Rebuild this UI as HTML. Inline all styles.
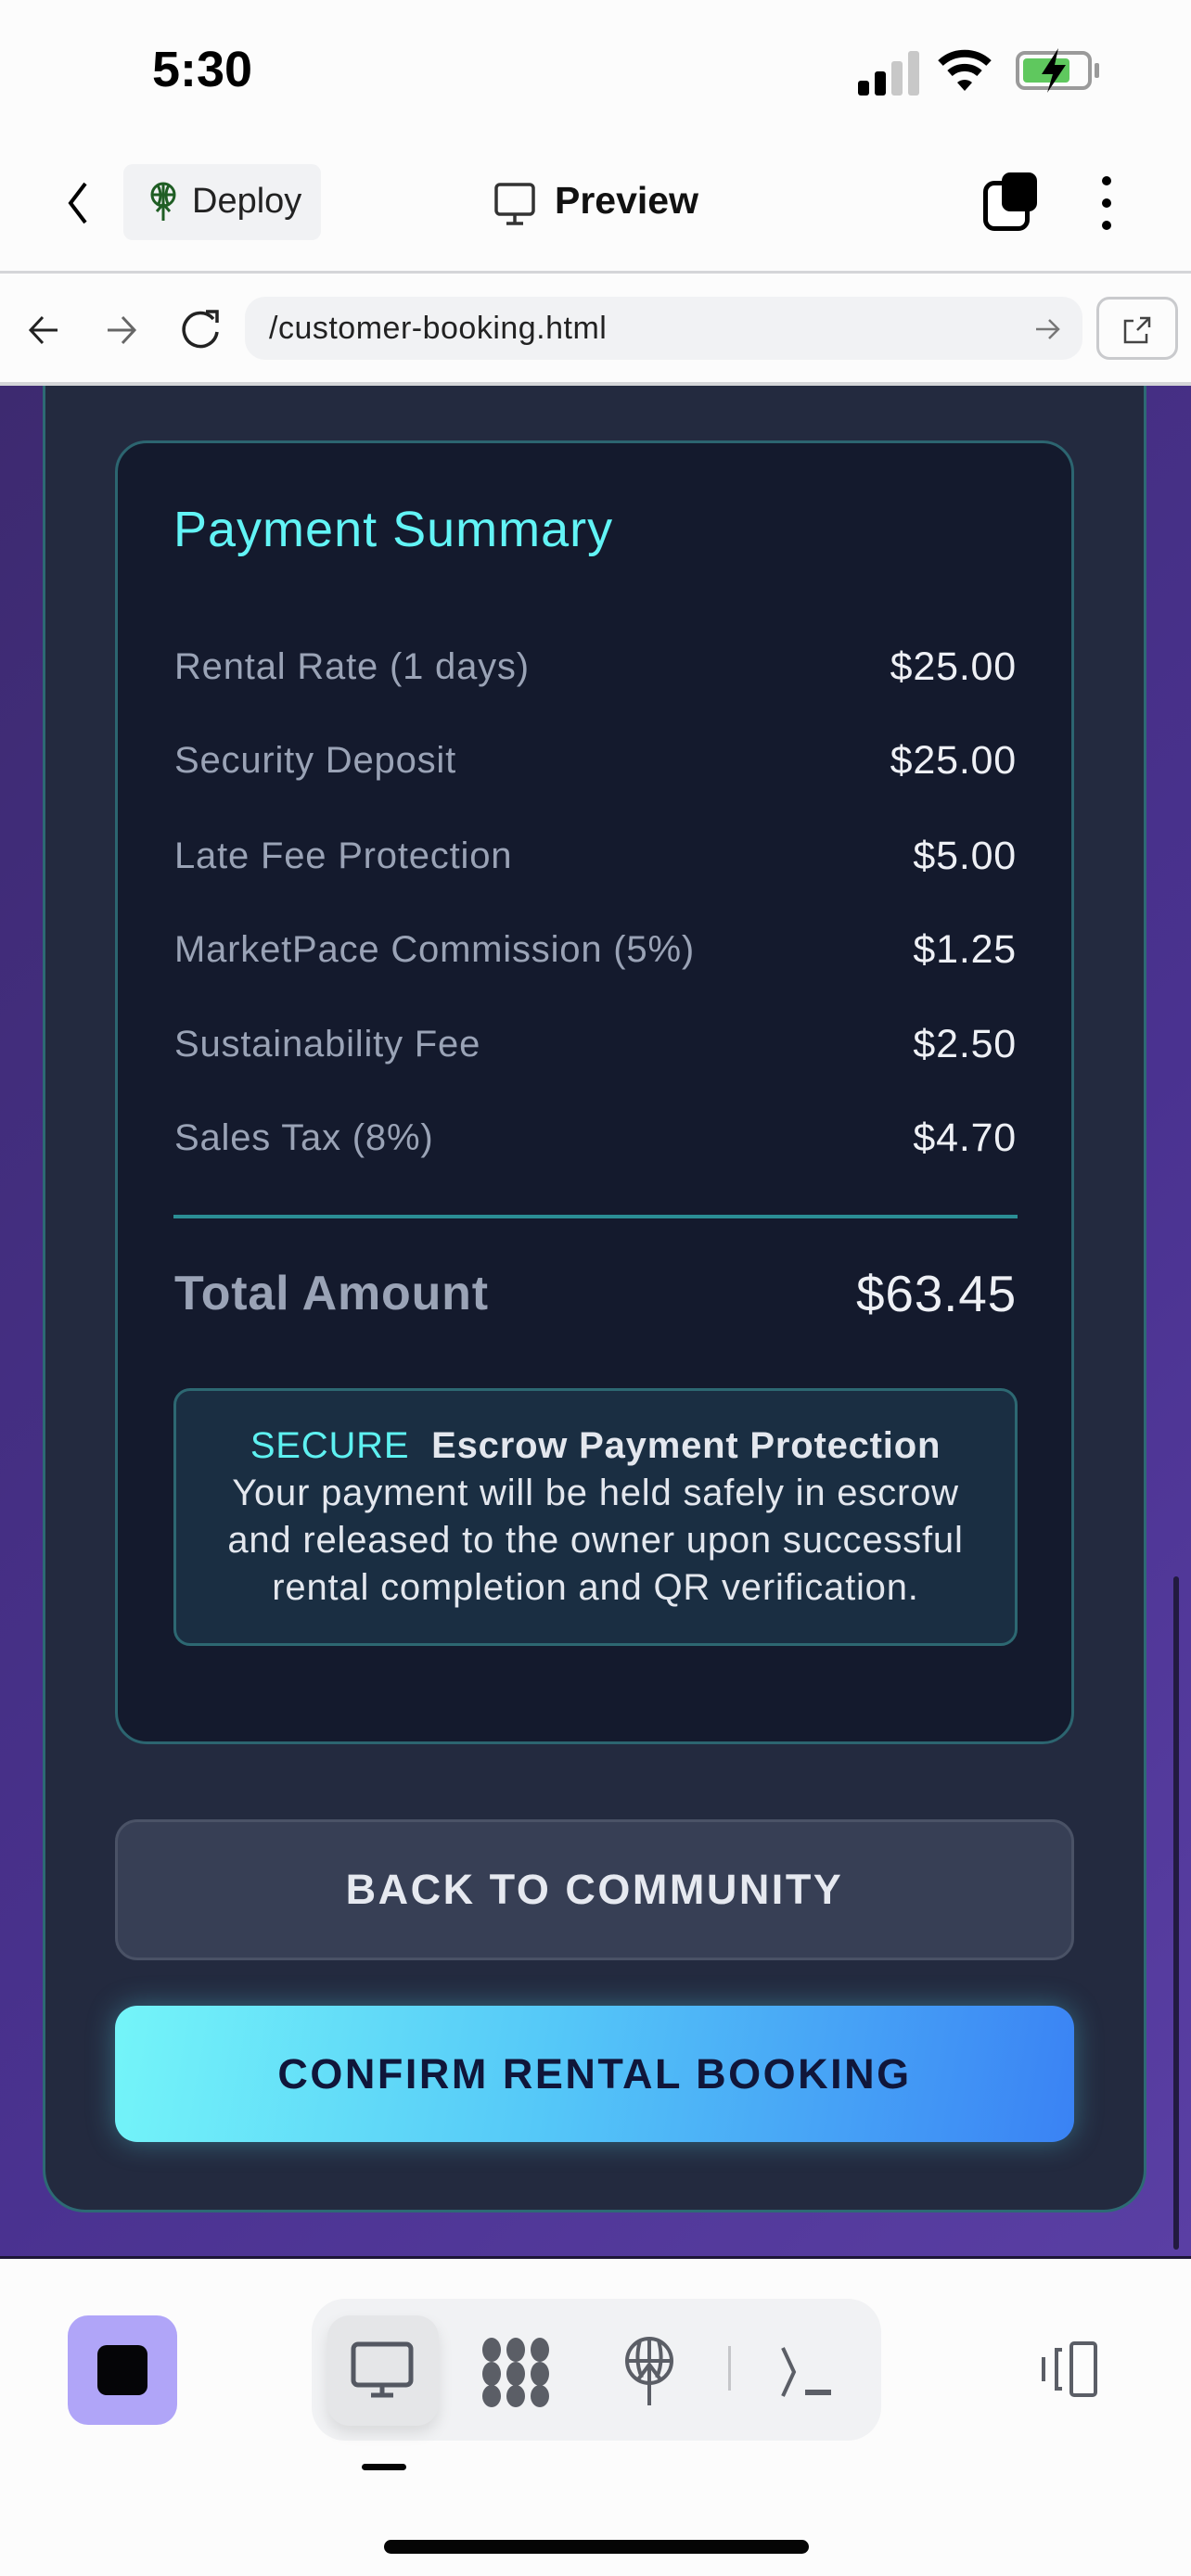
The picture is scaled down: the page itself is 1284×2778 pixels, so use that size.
<!DOCTYPE html>
<html><head><meta charset="utf-8"><style>
*{margin:0;padding:0;box-sizing:border-box}
body{width:1284px;height:2778px;background:#fcfcfc;font-family:"Liberation Sans",sans-serif;position:relative;overflow:hidden}
.abs{position:absolute}
.row{position:absolute;left:188px;width:908px;display:flex;justify-content:space-between;font-size:40px;line-height:48px;letter-spacing:0.8px}
.row .l{color:#9aa3b6}.row .v{color:#eef0f5;font-size:43px}
</style></head><body>
<!-- status bar -->
<div class="abs" style="left:164px;top:44px;font-size:54px;font-weight:bold;color:#000">5:30</div>
<div class="abs" style="left:925px;top:87px;width:12px;height:16px;background:#000;border-radius:3px"></div>
<div class="abs" style="left:943px;top:77px;width:12px;height:26px;background:#000;border-radius:3px"></div>
<div class="abs" style="left:961px;top:66px;width:12px;height:37px;background:#c8c8c8;border-radius:3px"></div>
<div class="abs" style="left:979px;top:55px;width:12px;height:48px;background:#c8c8c8;border-radius:3px"></div>
<svg class="abs" style="left:1010px;top:52px" width="60" height="48" viewBox="0 0 60 48"><path d="M4 16 A38 38 0 0 1 56 16" stroke="#000" stroke-width="8" fill="none"/><path d="M14 27 A24 24 0 0 1 46 27" stroke="#000" stroke-width="8" fill="none"/><path d="M22 37 L30 46 L38 37 A12 12 0 0 0 22 37Z" fill="#000"/></svg>
<div class="abs" style="left:1095px;top:55px;width:82px;height:42px;border:4px solid #9a9a9a;border-radius:10px"><div style="margin:4px;width:50px;height:26px;background:#5fc85e;border-radius:4px"></div></div>
<div class="abs" style="left:1180px;top:68px;width:5px;height:16px;background:#9a9a9a;border-radius:2px"></div>
<svg class="abs" style="left:1115px;top:50px" width="40" height="52" viewBox="0 0 40 52"><path d="M26 2 L8 30 H20 L14 50 L34 20 H22Z" fill="#000"/></svg>
<!-- toolbar -->
<svg class="abs" style="left:68px;top:194px" width="30" height="50" viewBox="0 0 30 50"><path d="M24 4 L8 25 L24 46" stroke="#000" stroke-width="4" fill="none"/></svg>
<div class="abs" style="left:133px;top:177px;width:213px;height:82px;background:#f1f2f4;border-radius:10px"></div>
<svg class="abs" style="left:160px;top:196px" width="32" height="44" viewBox="0 0 32 44"><g stroke="#1f5e24" stroke-width="3" fill="none"><circle cx="16" cy="14" r="12"/><path d="M4 14H28M16 2V42M10 4Q16 14 10 26M22 4Q16 14 22 26M9 32L16 24L23 32"/></g></svg>
<div class="abs" style="left:207px;top:196px;font-size:38px;color:#222">Deploy</div>
<svg class="abs" style="left:532px;top:196px" width="46" height="48" viewBox="0 0 46 48"><rect x="3" y="3" width="40" height="32" rx="4" stroke="#333" stroke-width="3.5" fill="none"/><path d="M23 35V44M14 45H32" stroke="#333" stroke-width="3.5"/></svg>
<div class="abs" style="left:598px;top:193px;font-size:41px;font-weight:bold;color:#111">Preview</div>
<div class="abs" style="left:1060px;top:195px;width:50px;height:54px;border:5px solid #000;border-radius:12px;background:#fff"></div>
<div class="abs" style="left:1080px;top:186px;width:38px;height:42px;background:#000;border-radius:9px"></div>
<div class="abs" style="left:1188px;top:190px;width:10px;height:10px;background:#000;border-radius:50%;box-shadow:0 24px 0 #000,0 48px 0 #000"></div>
<div class="abs" style="left:0;top:292px;width:1284px;height:3px;background:#d4d5d8"></div>
<!-- url bar -->
<svg class="abs" style="left:28px;top:336px" width="40" height="40" viewBox="0 0 40 40"><path d="M34 20H6M18 6L5 20L18 34" stroke="#222" stroke-width="3" fill="none"/></svg>
<svg class="abs" style="left:110px;top:336px" width="40" height="40" viewBox="0 0 40 40"><path d="M6 20H34M22 6L35 20L22 34" stroke="#666" stroke-width="3" fill="none"/></svg>
<svg class="abs" style="left:194px;top:330px" width="46" height="50" viewBox="0 0 46 50"><path d="M36 14A18 18 0 1 0 40 28" stroke="#222" stroke-width="3.5" fill="none"/><path d="M28 6H40V18" stroke="#222" stroke-width="3.5" fill="none"/></svg>
<div class="abs" style="left:264px;top:320px;width:903px;height:68px;background:#f1f2f4;border-radius:22px"></div>
<div class="abs" style="left:290px;top:335px;font-size:34px;color:#222;letter-spacing:0.5px">/customer-booking.html</div>
<svg class="abs" style="left:1114px;top:340px" width="30" height="30" viewBox="0 0 30 30"><path d="M3 15H27M17 5L27 15L17 25" stroke="#777" stroke-width="2.5" fill="none"/></svg>
<div class="abs" style="left:1182px;top:320px;width:88px;height:68px;border:3px solid #c9cacd;border-radius:14px"></div>
<svg class="abs" style="left:1208px;top:338px" width="36" height="36" viewBox="0 0 36 36"><path d="M14 8H5V31H28V22M18 18L31 5M21 5H31V15" stroke="#444" stroke-width="2.5" fill="none"/></svg>
<div class="abs" style="left:0;top:412px;width:1284px;height:4px;background:#d4d5d8"></div>
<!-- content -->
<div class="abs" style="left:0;top:416px;width:1284px;height:2020px;background:linear-gradient(135deg,#3d2a70,#4a3290 60%,#5a3fa4);border-bottom:3px solid #1d1638"></div>
<div class="abs" style="left:46px;top:416px;width:1190px;height:1970px;background:#232a3f;border:3px solid #2d6a74;border-top:none;border-radius:0 0 46px 46px"></div>
<div class="abs" style="left:124px;top:475px;width:1034px;height:1406px;background:#141a2d;border:3px solid #2c6570;border-radius:34px"></div>
<div class="abs" style="left:187px;top:540px;font-size:54px;letter-spacing:1px;color:#62f4f6">Payment Summary</div>
<div class="row" style="top:695px"><span class="l">Rental Rate (1 days)</span><span class="v">$25.00</span></div>
<div class="row" style="top:796px"><span class="l">Security Deposit</span><span class="v">$25.00</span></div>
<div class="row" style="top:899px"><span class="l">Late Fee Protection</span><span class="v">$5.00</span></div>
<div class="row" style="top:1000px"><span class="l">MarketPace Commission (5%)</span><span class="v">$1.25</span></div>
<div class="row" style="top:1102px"><span class="l">Sustainability Fee</span><span class="v">$2.50</span></div>
<div class="row" style="top:1203px"><span class="l">Sales Tax (8%)</span><span class="v">$4.70</span></div>
<div class="abs" style="left:187px;top:1310px;width:910px;height:4px;background:#2b8e95"></div>
<div class="row" style="top:1366px;font-size:52px;line-height:58px"><span class="l" style="font-weight:bold">Total Amount</span><span class="v" style="font-size:55px">$63.45</span></div>
<div class="abs" style="left:187px;top:1497px;width:910px;height:278px;background:#1a2e42;border:3px solid #2d6872;border-radius:18px;text-align:center;color:#e3e7ee;font-size:40px;letter-spacing:0.8px;line-height:51px;padding-top:34px;white-space:nowrap">
<span style="color:#5ef1f1">SECURE</span>&nbsp; <b>Escrow Payment Protection</b><br>Your payment will be held safely in escrow<br>and released to the owner upon successful<br>rental completion and QR verification.</div>
<div class="abs" style="left:124px;top:1962px;width:1034px;height:152px;background:#373f55;border:3px solid #4a5266;border-radius:24px;text-align:center;line-height:146px;font-size:45px;letter-spacing:2.5px;color:#e6e9f0;font-weight:bold">BACK TO COMMUNITY</div>
<div class="abs" style="left:124px;top:2163px;width:1034px;height:147px;background:linear-gradient(100deg,#74f5f9,#55c8f8 45%,#3a82f4);border-radius:24px;text-align:center;line-height:147px;font-size:45px;letter-spacing:2.5px;color:#10163a;font-weight:bold;box-shadow:0 0 30px rgba(90,220,240,.35)">CONFIRM RENTAL BOOKING</div>
<div class="abs" style="left:1265px;top:1700px;width:6px;height:726px;background:#221a40;border-radius:3px"></div>
<!-- bottom bar -->
<div class="abs" style="left:73px;top:2497px;width:118px;height:118px;background:#b0a5f8;border-radius:22px"></div>
<div class="abs" style="left:105px;top:2529px;width:54px;height:54px;background:#050507;border-radius:10px"></div>
<div class="abs" style="left:336px;top:2479px;width:614px;height:153px;background:#f1f2f4;border-radius:36px"></div>
<div class="abs" style="left:353px;top:2497px;width:120px;height:119px;background:#e5e6e8;border-radius:24px;box-shadow:0 8px 16px rgba(0,0,0,.1)"></div>
<svg class="abs" style="left:378px;top:2525px" width="68" height="62" viewBox="0 0 68 62"><rect x="3" y="3" width="62" height="44" rx="5" stroke="#545862" stroke-width="5" fill="none"/><path d="M34 47V56M22 58H46" stroke="#545862" stroke-width="5"/></svg>
<svg class="abs" style="left:518px;top:2520px" width="76" height="76" viewBox="0 0 76 76" fill="#5b5e66"><ellipse cx="12" cy="14" rx="10" ry="13"/><ellipse cx="38" cy="14" rx="10" ry="13"/><ellipse cx="64" cy="14" rx="10" ry="13"/><ellipse cx="12" cy="40" rx="10" ry="13"/><ellipse cx="38" cy="40" rx="10" ry="13"/><ellipse cx="64" cy="40" rx="10" ry="13"/><ellipse cx="12" cy="64" rx="10" ry="12"/><ellipse cx="38" cy="64" rx="10" ry="12"/><ellipse cx="64" cy="64" rx="10" ry="12"/></svg>
<svg class="abs" style="left:672px;top:2520px" width="56" height="76" viewBox="0 0 56 76"><g stroke="#5b5e66" stroke-width="4" fill="none"><circle cx="28" cy="26" r="24"/><path d="M4 26H52M28 2V26M18 4Q12 26 20 44M38 4Q44 26 36 44M28 74V30M16 46L28 30L40 46"/></g></svg>
<div class="abs" style="left:785px;top:2530px;width:3px;height:48px;background:#c5c6c9"></div>
<svg class="abs" style="left:840px;top:2528px" width="60" height="58" viewBox="0 0 60 58"><path d="M4 4L16 30L4 56" stroke="#5b5e66" stroke-width="4" fill="none"/><path d="M28 52H56" stroke="#5b5e66" stroke-width="6"/></svg>
<svg class="abs" style="left:1115px;top:2524px" width="72" height="62" viewBox="0 0 72 62"><g stroke="#5b5e66" stroke-width="4" fill="none"><rect x="40" y="3" width="26" height="56" rx="3"/><path d="M30 10H24V52H30M10 18V44"/></g></svg>
<div class="abs" style="left:390px;top:2657px;width:48px;height:7px;background:#050505;border-radius:4px"></div>
<div class="abs" style="left:414px;top:2739px;width:458px;height:15px;background:#050505;border-radius:8px"></div>
</body></html>
